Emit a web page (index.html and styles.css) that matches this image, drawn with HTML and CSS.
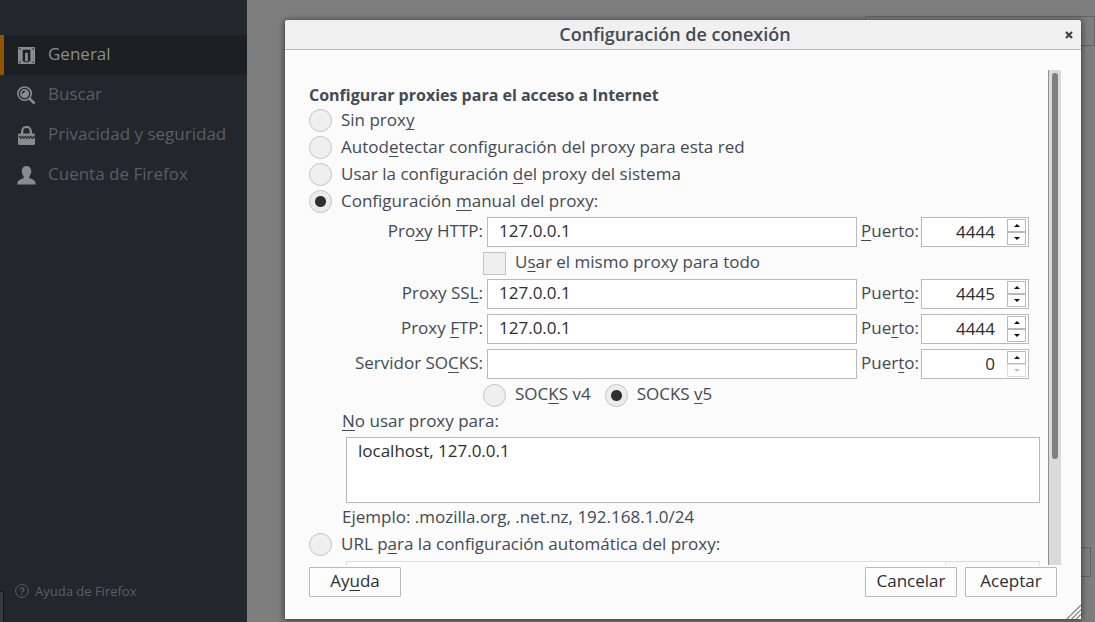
FILE: index.html
```html
<!DOCTYPE html>
<html lang="es">
<head>
<meta charset="utf-8">
<title>Configuración de conexión</title>
<link rel="stylesheet" href="styles.css">
</head>
<body>
<div class="page">
  <nav class="sidebar">
    <ul class="menu">
      <li><a class="item active" href="#general">
        <svg class="icon" viewBox="0 0 20 20"><path fill="currentColor" fill-rule="evenodd" d="M2 1h16a1 1 0 0 1 1 1v16a1 1 0 0 1-1 1H2a1 1 0 0 1-1-1V2a1 1 0 0 1 1-1zM6 4v12h2.500V7h3v9H14V4zM2.300 2.300v1.400h1.400V2.300zM16.300 2.300v1.400h1.400V2.300zM2.300 16.300v1.400h1.400v-1.400zM16.300 16.300v1.400h1.400v-1.400z"/><path fill="none" stroke="#1b1f21" d="M7.500 16.500h5"/></svg>
        <span>General</span></a></li>
      <li><a class="item" href="#buscar">
        <svg class="icon" viewBox="0 0 20 20"><circle cx="8" cy="8" r="7" fill="none" stroke="currentColor" stroke-width="1.700"/><circle cx="8" cy="8" r="4.800" fill="currentColor"/><path d="M4.800 8.500C5 6 6.500 4.800 8.800 4.800 7.800 7 6.800 7.600 4.800 8.500z" fill="#22262d"/><path d="M13 13l5.500 5.500" stroke="currentColor" stroke-width="2.800"/></svg>
        <span>Buscar</span></a></li>
      <li><a class="item" href="#privacidad">
        <svg class="icon" viewBox="0 0 20 20"><path d="M5.500 9V5.500a4.500 4.500 0 0 1 9 0V9" fill="none" stroke="currentColor" stroke-width="2.400"/><rect x="1" y="8" width="18" height="12" rx="1.500" fill="currentColor"/><path d="M2 10.500l3 3M5 10.500l3 3M8 10.500l3 3M11 10.500l3 3M14 10.500l3 3M17 10.500l2 2" stroke="#22262d" stroke-width="1.500"/></svg>
        <span>Privacidad y seguridad</span></a></li>
      <li><a class="item" href="#cuenta">
        <svg class="icon" viewBox="0 0 20 20"><path fill="currentColor" d="M10 0c3.200 0 5 2.200 5 5.300 0 2.600-1 4.200-2 5.400v2c2 1.300 6.500 2 6.500 5.300v1.500H.5V18C.5 14.700 5 14 7 12.700v-2C6 9.500 5 7.900 5 5.300 5 2.200 6.800 0 10 0z"/></svg>
        <span>Cuenta de Firefox</span></a></li>
    </ul>
    <a class="help" href="#ayuda">
      <svg class="help-icon" viewBox="0 0 14 14" fill="none" stroke="currentColor"><circle cx="7" cy="7" r="6.400"/><path d="M5.200 5.600c0-2.400 3.700-2.300 3.700 0C8.900 7 7 7 7 8.600M7 9.800v1.200" stroke-width="1.300"/></svg>
      <span>Ayuda de Firefox</span></a>
    <div class="status-edge"></div>
  </nav>
  <main class="backdrop">
    <div class="search-outline"></div>
    <div class="button-outline"></div>
  </main>
</div>

<section class="dialog" role="dialog" aria-labelledby="dialog-title">
  <header class="titlebar">
    <h1 class="title" id="dialog-title">Configuración de conexión</h1>
    <button class="close" type="button" aria-label="Cerrar"><svg viewBox="0 0 8 8"><path d="M1 1l6 6M7 1L1 7" stroke="currentColor" stroke-width="2.200"/></svg></button>
  </header>
  <form class="body">
    <div class="viewport">
      <div class="content">
        <h2 class="heading">Configurar proxies para el acceso a Internet</h2>
        <label class="option"><input type="radio" name="mode"><span>Sin prox<u>y</u></span></label>
        <label class="option"><input type="radio" name="mode"><span>Autod<u>e</u>tectar configuración del proxy para esta red</span></label>
        <label class="option"><input type="radio" name="mode"><span>Usar la configuración <u>d</u>el proxy del sistema</span></label>
        <label class="option"><input type="radio" name="mode" checked><span>Configuración <u>m</u>anual del proxy:</span></label>

        <div class="grid">
          <label class="name" for="http">Pro<u>x</u>y HTTP:</label>
          <input class="field" id="http" type="text" value="127.0.0.1">
          <label for="http-port"><u>P</u>uerto:</label>
          <div class="spin"><input id="http-port" type="text" inputmode="numeric" value="4444"><div class="arrows"><button type="button" class="up" aria-label="Más"></button><button type="button" class="down" aria-label="Menos"></button></div></div>

          <label class="option under"><input type="checkbox"><span>U<u>s</u>ar el mismo proxy para todo</span></label>

          <label class="name" for="ssl">Proxy SS<u>L</u>:</label>
          <input class="field" id="ssl" type="text" value="127.0.0.1">
          <label for="ssl-port">Puert<u>o</u>:</label>
          <div class="spin"><input id="ssl-port" type="text" inputmode="numeric" value="4445"><div class="arrows"><button type="button" class="up" aria-label="Más"></button><button type="button" class="down" aria-label="Menos"></button></div></div>

          <label class="name" for="ftp">Proxy <u>F</u>TP:</label>
          <input class="field" id="ftp" type="text" value="127.0.0.1">
          <label for="ftp-port">Pue<u>r</u>to:</label>
          <div class="spin"><input id="ftp-port" type="text" inputmode="numeric" value="4444"><div class="arrows"><button type="button" class="up" aria-label="Más"></button><button type="button" class="down" aria-label="Menos"></button></div></div>

          <label class="name" for="socks">Servidor SO<u>C</u>KS:</label>
          <input class="field" id="socks" type="text">
          <label for="socks-port">Puer<u>t</u>o:</label>
          <div class="spin"><input id="socks-port" type="text" inputmode="numeric" value="0"><div class="arrows"><button type="button" class="up" aria-label="Más"></button><button type="button" class="down" aria-label="Menos" disabled></button></div></div>

          <div class="under versions">
            <label class="option"><input type="radio" name="socks"><span>SOC<u>K</u>S v4</span></label>
            <label class="option"><input type="radio" name="socks" checked><span>SOCKS <u>v</u>5</span></label>
          </div>
        </div>

        <div class="exceptions">
          <label for="no-proxy"><u>N</u>o usar proxy para:</label>
          <textarea class="list" id="no-proxy">localhost, 127.0.0.1</textarea>
          <p class="example">Ejemplo: .mozilla.org, .net.nz, 192.168.1.0/24</p>
        </div>
        <label class="option"><input type="radio" name="mode"><span>URL p<u>a</u>ra la configuración automática del proxy:</span></label>
        <div class="auto">
          <input class="auto-url" type="text" aria-label="URL" disabled>
          <button class="reload" type="button" aria-label="Recargar" disabled></button>
        </div>
      </div>
      <div class="track"><div class="thumb"></div></div>
    </div>
    <footer class="actions">
      <button class="button help-button" type="button">Ay<u>u</u>da</button>
      <button class="button" type="button">Cancelar</button>
      <button class="button" type="submit">Aceptar</button>
    </footer>
  </form>
  <svg class="grip" viewBox="0 0 16 16"><path d="M1 16L16 1M6 16L16 6M11 16l5-5" stroke="#8c8c8c" stroke-width="1.500"/></svg>
</section>
</body>
</html>
```
FILE: styles.css
```css
* { box-sizing: border-box; }

body {
  margin: 0;
  font: 17px/22px "Open Sans", "Noto Sans", sans-serif;
  color: #434a54;
  overflow: hidden;
}

h1, h2, p, ul { margin: 0; padding: 0; font-size: inherit; }
input, textarea, button { margin: 0; font: inherit; color: #2b2e31; }
label, .example { white-space: nowrap; }
u { text-decoration: underline; text-decoration-thickness: 1px; text-underline-offset: 3px; text-decoration-skip-ink: none; }

.page { display: flex; height: 100vh; background: #7e7e7e; }

/* Sidebar */
.sidebar {
  position: relative;
  display: flex;
  flex-direction: column;
  justify-content: space-between;
  flex: none;
  width: 247px;
  padding: 35px 0 20px;
  background: #22262d;
}
.menu { list-style: none; }
.item {
  display: flex;
  align-items: center;
  gap: 12px;
  height: 40px;
  padding-left: 13px;
  border-left: 4px solid transparent;
  color: #5c5f61;
  text-decoration: none;
}
.item span { padding-bottom: 2px; }
.item.active { background: #1b1f21; border-color: #8f5600; color: #8b8d8e; }
.icon { width: 19px; height: 19px; color: #8a8b8c; }
.help {
  display: flex;
  align-items: center;
  gap: 6px;
  padding-left: 15px;
  color: #5c5f61;
  font-size: 13px;
  text-decoration: none;
}
.help-icon { width: 14px; height: 14px; }
.status-edge {
  position: absolute;
  left: 0;
  bottom: 0;
  width: 4px;
  height: 31px;
  background: #383b3d;
  border: solid #15181b;
  border-width: 1px 1px 0 0;
}

/* Dimmed page behind the dialog */
.backdrop {
  display: flex;
  flex: 1;
  flex-direction: column;
  justify-content: space-between;
  align-items: flex-end;
  padding: 16px 0 45px;
}
.search-outline { width: 230px; height: 30px; border: 1px solid #626262; }
.button-outline { width: 120px; height: 30px; margin-right: 4px; border: 1px solid #626262; }

/* Dialog */
.dialog {
  position: absolute;
  inset: 20px 14px 3px 285px;
  display: flex;
  flex-direction: column;
  background: #fbfbfb;
  border-radius: 3px 3px 0 0;
  box-shadow: 0 1px 6px 1px rgba(0, 0, 0, .5);
}
.titlebar {
  display: flex;
  align-items: center;
  justify-content: center;
  flex: none;
  height: 30px;
  background: #f0f0f0;
  border-bottom: 1px solid #b9b9b9;
  border-radius: 3px 3px 0 0;
}
.title { flex: 1; padding-bottom: 2px; text-align: center; font-size: 18px; font-weight: 600; }
.close { display: flex; margin-right: 8px; padding: 0; border: 0; background: none; color: #3f4346; }
.close svg { width: 8px; height: 8px; }

.body {
  display: flex;
  flex-direction: column;
  flex: 1;
  min-height: 0;
  padding: 20px 20px 22px 24px;
}
.viewport { display: flex; flex: 1; min-height: 0; }
.content { flex: 1; overflow: hidden; padding: 14px 8px 0 0; }
.track { display: flex; justify-content: center; width: 13px; padding-top: 3px; background: #dadada; border-left: 1px solid #8f8f8f; }
.thumb { width: 6px; height: 78.500%; border-radius: 3px; background: #7e807f; }

.heading { font-size: 16px; font-weight: 700; line-height: 23px; }

.option { display: flex; align-items: center; gap: 9px; height: 27px; }
.option span { padding-bottom: 2px; }
.option input {
  appearance: none;
  flex: none;
  width: 23px;
  height: 23px;
  background: #efefef;
  border: 1px solid #c3c3c3;
}
.option input[type="radio"] { border-radius: 50%; }
.option input[type="radio"]:checked { background: radial-gradient(circle, #2c3232 5px, #ececec 6px); }

.grid {
  display: grid;
  grid-template-columns: 141px 1fr 56px 112px;
  row-gap: 5px;
  align-items: center;
  padding: 2px 11px 0 33px;
}
.grid > label { padding-bottom: 2px; }
.name { text-align: right; }
.field { height: 30px; min-width: 0; margin: 0 4px; padding: 0 11px 3px; background: #fff; border: 1px solid #b9b9b9; }
.grid > .under { grid-column: 2 / -1; height: 22px; padding: 0; }
.versions { display: flex; gap: 14px; }
.versions .option { height: 22px; }

.spin { display: flex; align-items: center; height: 30px; margin-left: 4px; padding-right: 2px; background: #fff; border: 1px solid #b9b9b9; }
.spin input { flex: 1; min-width: 0; padding: 0 12px 0 0; border: 0; background: none; text-align: right; }
.arrows { display: flex; flex-direction: column; width: 19px; }
.arrows button { display: flex; align-items: center; justify-content: center; height: 13px; padding: 0; background: #fff; border: 1px solid #b9b9b9; }
.arrows button::after { content: ""; border: 3px solid transparent; }
.arrows .up::after { border-top: 0; border-bottom: 3px solid #111; }
.arrows .down::after { border-bottom: 0; border-top: 3px solid #111; }
.arrows button:disabled { border-color: #dedede; }
.arrows .down:disabled::after { border-top-color: #c4c4c4; }

.exceptions { display: flex; flex-direction: column; padding: 4px 0 3px 33px; }
.list { height: 66px; margin: 5px 0 3px 4px; padding: 2px 11px; resize: none; background: #fff; border: 1px solid #b9b9b9; }
.auto { display: flex; margin: 3px 0 0 37px; }
.auto-url { flex: 1; height: 30px; background: #fff; border: 1px solid #dcdcdc; }
.reload { width: 94px; background: #fbfbfb; border: 1px solid #dcdcdc; border-left: 0; }

.actions { display: flex; gap: 8px; padding: 2px 4px 0 0; }
.button { width: 92px; height: 30px; padding: 0 0 2px; background: #fdfdfd; border: 1px solid #b9b9b9; border-radius: 1px; }
.help-button { margin-right: auto; }
.grip { position: absolute; right: 0; bottom: 0; width: 15px; height: 15px; }
```
